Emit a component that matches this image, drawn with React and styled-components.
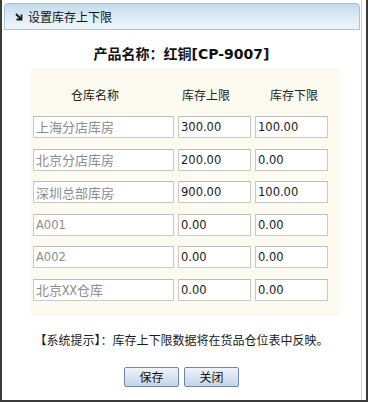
import React from "react";
import styled, { createGlobalStyle } from "styled-components";

const Global = createGlobalStyle`
  html, body { margin: 0; padding: 0; background: #fff; }
  body { font-family: "Noto Sans CJK SC", "DejaVu Sans", sans-serif; }
  * { box-sizing: border-box; }
`;

const Frame = styled.div`
  width: 368px;
  height: 402px;
  border-left: 2px solid #3a3a3a;
  border-right: 2px solid #3a3a3a;
  border-bottom: 2px solid #3a3a3a;
  background: #fff;
  display: flex;
`;

const Panel = styled.div`
  width: 360px;
  height: 100%;
  border-right: 1px solid #d4d4d4;
  display: flex;
  flex-direction: column;
  align-items: center;
`;

const TitleBar = styled.div`
  align-self: stretch;
  margin: 3px 1px 0 2px;
  height: 27px;
  border: 1px solid #a9c2d9;
  border-radius: 4px 4px 0 0;
  background: linear-gradient(to bottom, #c3daeb 0%, #dcebf5 50%, #eff6fb 100%);
  display: flex;
  align-items: center;
  padding-left: 10px;
  gap: 5px;
  font-size: 12px;
  color: #111;
`;

const Title = styled.div`
  margin-top: 13px;
  height: 20px;
  line-height: 20px;
  font-size: 14px;
  font-weight: bold;
  color: #111;
  font-family: "DejaVu Sans", "Noto Sans CJK SC", sans-serif;
  white-space: nowrap;
`;

const TitleCn = styled.span`
  font-family: "Noto Sans CJK SC", sans-serif;
  font-weight: bold;
`;

const Sheet = styled.div`
  margin-top: 5px;
  align-self: stretch;
  margin-left: 28px;
  margin-right: 21px;
  background: #fdfbef;
  padding: 17px 10px 15px 3px;
  display: flex;
  flex-direction: column;
  gap: 10.6px;
`;

const Grid = styled.div`
  display: grid;
  grid-template-columns: 141px 73px 73px;
  column-gap: 4px;
  height: ${(p) => p.$h}px;
`;

const HeadRow = styled(Grid)`
  margin-bottom: 0.4px;
`;

const HeadCell = styled.div`
  font-size: 12px;
  line-height: 20px;
  color: #222;
  text-align: center;
  padding-left: ${(p) => p.$pl || 0}px;
  padding-right: ${(p) => p.$pr || 0}px;
  white-space: nowrap;
`;

const Field = styled.div`
  height: 22px;
  border: 1px solid #c9c9c9;
  border-top-color: #bdbdbd;
  background: #fff;
  display: flex;
  align-items: center;
  padding-left: 2px;
  font-size: ${(p) => (p.$name ? 13 : 11.5)}px;
  color: ${(p) => (p.$name ? "#8c8c8c" : "#1a1a1a")};
  font-family: ${(p) =>
    p.$name
      ? `"Noto Sans CJK SC", "DejaVu Sans", sans-serif`
      : `"DejaVu Sans", sans-serif`};
  white-space: nowrap;
  overflow: hidden;
`;

const NameText = styled.span`
  font-family: "DejaVu Sans", "Noto Sans CJK SC", sans-serif;
  font-size: 11.5px;
`;

const Note = styled.div`
  margin-top: 15px;
  height: 18px;
  line-height: 18px;
  font-size: 12px;
  color: #1a1a1a;
  white-space: nowrap;
`;

const Buttons = styled.div`
  margin-top: 18px;
  display: flex;
  gap: 5px;
`;

const Button = styled.button`
  width: 55px;
  height: 20px;
  padding: 0;
  border: 1px solid #6f88a6;
  border-radius: 2px;
  background: linear-gradient(to bottom, #eef4fa 0%, #d6e3f0 55%, #c4d5e7 100%);
  font-family: "Noto Sans CJK SC", sans-serif;
  font-size: 12px;
  color: #111;
  line-height: 18px;
`;

const rows = [
  ["上海分店库房", "300.00", "100.00"],
  ["北京分店库房", "200.00", "0.00"],
  ["深圳总部库房", "900.00", "100.00"],
  ["A001", "0.00", "0.00"],
  ["A002", "0.00", "0.00"],
  ["北京XX仓库", "0.00", "0.00"],
];

function renderName(n) {
  if (/^[A-Z0-9]+$/.test(n)) return <NameText>{n}</NameText>;
  return n;
}

export default function App() {
  return (
    <>
      <Global />
      <Frame>
        <Panel>
          <TitleBar>
            <svg width="8" height="8" viewBox="0 0 8 8">
              <path d="M1 1 L6 6 M1.5 6.5 H6.5 V1.5" stroke="#1a1a1a" strokeWidth="1.8" fill="none" />
            </svg>
            <span>设置库存上下限</span>
          </TitleBar>
          <Title>
            <TitleCn>产品名称：红铜</TitleCn>[CP-9007]
          </Title>
          <Sheet>
            <HeadRow $h={20}>
              <HeadCell $pr={17}>仓库名称</HeadCell>
              <HeadCell $pr={17}>库存上限</HeadCell>
              <HeadCell $pl={5}>库存下限</HeadCell>
            </HeadRow>
            {rows.map((r, i) => (
              <Grid key={i} $h={22}>
                <Field $name>{renderName(r[0])}</Field>
                <Field>{r[1]}</Field>
                <Field>{r[2]}</Field>
              </Grid>
            ))}
          </Sheet>
          <Note>【系统提示】：库存上下限数据将在货品仓位表中反映。</Note>
          <Buttons>
            <Button>保存</Button>
            <Button>关闭</Button>
          </Buttons>
        </Panel>
      </Frame>
    </>
  );
}
